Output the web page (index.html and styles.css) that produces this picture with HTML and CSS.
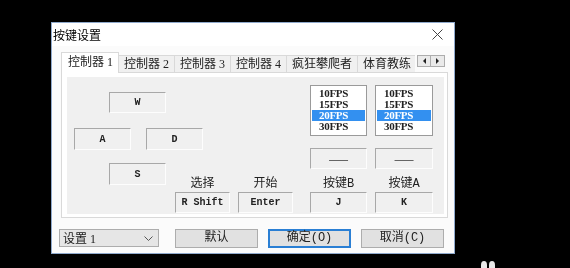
FILE: index.html
```html
<!DOCTYPE html>
<html lang="zh-CN">
<head>
    <meta charset="UTF-8">
    <title>按键设置</title>
    <link rel="stylesheet" href="styles.css">
</head>
<body>
    <div class="screen">
        <div class="dialog">
            <div class="titlebar">
                <span class="title">按键设置</span>
                <svg class="close" width="11" height="11" viewBox="0 0 11 11">
                    <path d="M0.5 0.5 L10.5 10.5 M10.5 0.5 L0.5 10.5" stroke="#444" stroke-width="1" fill="none"/>
                </svg>
            </div>

            <div class="tabs-area">
                <div class="tabrow">
                    <div class="tablist">
                        <div class="tab active">控制器 1</div>
                        <div class="tab">控制器 2</div>
                        <div class="tab">控制器 3</div>
                        <div class="tab">控制器 4</div>
                        <div class="tab">疯狂攀爬者</div>
                        <div class="tab">体育教练</div>
                    </div>
                    <div class="scroller">
                        <span class="scroll-btn">
                            <svg width="5" height="6" viewBox="0 0 5 6"><path d="M4 0 L1 3 L4 6 Z" fill="#222"/></svg>
                        </span>
                        <span class="scroll-btn">
                            <svg width="5" height="6" viewBox="0 0 5 6"><path d="M1 0 L4 3 L1 6 Z" fill="#222"/></svg>
                        </span>
                    </div>
                </div>

                <div class="tabpage">
                    <div class="panel">
                        <div class="pad-area">
                            <div class="pad-row indent">
                                <div class="keybox">W</div>
                            </div>
                            <div class="pad-row middle">
                                <div class="keybox">A</div>
                                <div class="keybox">D</div>
                            </div>
                            <div class="pad-row indent last">
                                <div class="keybox">S</div>
                            </div>
                            <div class="sys-row">
                                <div class="key-group">
                                    <div class="key-label">选择</div>
                                    <div class="keybox">R Shift</div>
                                </div>
                                <div class="key-group">
                                    <div class="key-label">开始</div>
                                    <div class="keybox">Enter</div>
                                </div>
                            </div>
                        </div>

                        <div class="fire-area">
                            <div class="fire-col">
                                <div class="listbox">
                                    <div class="item">10FPS</div>
                                    <div class="item">15FPS</div>
                                    <div class="item selected">20FPS</div>
                                    <div class="item">30FPS</div>
                                </div>
                                <div class="keybox dash">——</div>
                                <div class="key-label">按键B</div>
                                <div class="keybox">J</div>
                            </div>
                            <div class="fire-col wide">
                                <div class="listbox">
                                    <div class="item">10FPS</div>
                                    <div class="item">15FPS</div>
                                    <div class="item selected">20FPS</div>
                                    <div class="item">30FPS</div>
                                </div>
                                <div class="keybox dash">——</div>
                                <div class="key-label">按键A</div>
                                <div class="keybox">K</div>
                            </div>
                        </div>
                    </div>
                </div>
            </div>

            <div class="bottom-row">
                <div class="combo">
                    <span>设置 1</span>
                    <svg width="9" height="5" viewBox="0 0 9 5"><path d="M0.5 0.5 L4.5 4.5 L8.5 0.5" stroke="#555" stroke-width="1" fill="none"/></svg>
                </div>
                <button class="btn">默认</button>
                <button class="btn default">确定(O)</button>
                <button class="btn">取消(C)</button>
            </div>
        </div>
    </div>

    <svg class="watermark" width="16" height="8" viewBox="0 0 16 8">
        <path d="M0 8 L0 4 Q0 0 3 0 Q6 0 6 4 L6 8 Z" fill="#e8e8e8"/>
        <path d="M8 8 L8 4 Q8 0 11 0 Q14 0 14 4 L14 8 Z" fill="#e8e8e8"/>
    </svg>
</body>
</html>
```

FILE: styles.css
```css
* {
    box-sizing: border-box;
}
body {
    margin: 0;
    background: #000;
    font-family: "Liberation Mono", "Noto Sans CJK SC", monospace;
    font-size: 12px;
    color: #1a1a1a;
    position: relative;
    height: 268px;
    overflow: hidden;
}
.screen {
    padding: 22px 0 0 51px;
    filter: blur(0.3px);
}
.dialog {
    width: 404px;
    height: 232px;
    background: #fbfbfb;
    border: 1px solid #8fa9cc;
}

.titlebar {
    height: 23px;
    display: flex;
    align-items: center;
    justify-content: space-between;
    padding: 0 11px 0 1px;
    background: #fff;
}
.title {
    font-family: "Noto Sans CJK SC", sans-serif;
    font-size: 12px;
    color: #000;
}

.tabs-area {
    margin-top: 6px;
    padding: 0 6px 0 9px;
}
.tabrow {
    height: 20px;
    display: flex;
    align-items: flex-end;
    position: relative;
    z-index: 1;
}
.tablist {
    flex: 1;
    display: flex;
    align-items: flex-end;
    overflow: hidden;
    height: 21px;
    margin-bottom: -1px;
}
.tab {
    flex: none;
    height: 17px;
    margin-bottom: 1px;
    padding: 0 5px;
    line-height: 16px;
    white-space: nowrap;
    font-family: "Liberation Serif", "Noto Sans CJK SC", serif;
    font-size: 12px;
    background: #f0f0f0;
    border: 1px solid #d9d9d9;
    border-bottom: none;
    border-left: none;
    color: #222;
}
.tab.active {
    height: 21px;
    margin-bottom: 0;
    padding: 0 5px 0 6px;
    line-height: 19px;
    background: #fff;
    border-left: 1px solid #d9d9d9;
}
.scroller {
    flex: none;
    align-self: flex-start;
    display: flex;
    margin: 3px 3px 0 2px;
}
.scroll-btn {
    width: 14px;
    height: 12px;
    display: flex;
    align-items: center;
    justify-content: center;
    background: #eaeaea;
    border: 1px solid #adadad;
}
.scroll-btn + .scroll-btn {
    border-left: none;
}

.tabpage {
    height: 146px;
    background: #fff;
    border: 1px solid #d9d9d9;
    padding: 4px 3px 3px 5px;
}
.panel {
    height: 137px;
    background: #f0f0f0;
    display: flex;
}

.pad-area {
    width: 226px;
    padding: 15px 0 0 7px;
}
.pad-row {
    display: flex;
    gap: 15px;
}
.pad-row.indent {
    padding-left: 35px;
}
.pad-row .keybox {
    width: 57px;
    height: 22px;
}
.pad-row:first-child .keybox {
    height: 21px;
}
.pad-row.middle {
    margin: 15px 0 13px;
}
.sys-row {
    display: flex;
    gap: 8px;
    margin: -7px 0 0 101px;
}
.key-group {
    width: 55px;
    display: flex;
    flex-direction: column;
}

.keybox {
    height: 21px;
    display: flex;
    align-items: center;
    justify-content: center;
    font-family: "Liberation Mono", monospace;
    font-weight: bold;
    font-size: 10px;
    color: #222;
    background: #f0f0f0;
    border-top: 1px solid #a8a8a8;
    border-left: 1px solid #a8a8a8;
    border-right: 1px solid #fdfdfd;
    border-bottom: 1px solid #fdfdfd;
}
.key-label {
    height: 13px;
    margin-bottom: 1px;
    line-height: 13px;
    text-align: center;
    font-family: "Liberation Mono", "Noto Sans CJK SC", monospace;
    font-size: 12px;
    color: #222;
}

.fire-area {
    display: flex;
    gap: 8px;
    margin-left: 17px;
}
.fire-col {
    width: 57px;
    padding-top: 8px;
    display: flex;
    flex-direction: column;
}
.fire-col.wide {
    width: 58px;
}
.listbox {
    height: 51px;
    background: #fff;
    border: 1px solid #9a9a9a;
    padding: 2px 1px;
}
.item {
    height: 11px;
    line-height: 11px;
    padding-left: 7px;
    font-family: "Liberation Serif", serif;
    font-weight: bold;
    font-size: 11px;
    letter-spacing: -0.3px;
    color: #222;
}
.item.selected {
    background: #3390f0;
    color: #fff;
}
.keybox.dash {
    margin: 12px 0 9px;
    font-family: "Noto Sans CJK SC", sans-serif;
    font-weight: normal;
    font-size: 12px;
    color: #333;
}

.bottom-row {
    margin-top: 11px;
    padding-left: 7px;
    display: flex;
    gap: 10px;
}
.combo {
    width: 100px;
    height: 18px;
    margin-right: 6px;
    display: flex;
    align-items: center;
    justify-content: space-between;
    padding: 0 5px 0 3px;
    background: #e6e6e6;
    border: 1px solid #adadad;
    font-family: "Liberation Serif", "Noto Sans CJK SC", serif;
    font-size: 12px;
}
.btn {
    width: 83px;
    height: 19px;
    padding: 0;
    background: #e1e1e1;
    border: 1px solid #adadad;
    font-family: "Liberation Mono", "Noto Sans CJK SC", monospace;
    font-size: 12px;
    color: #222;
    line-height: 15px;
}
.btn.default {
    border: 2px solid #2a7fd4;
}

.watermark {
    position: absolute;
    left: 481px;
    top: 261px;
}
```
